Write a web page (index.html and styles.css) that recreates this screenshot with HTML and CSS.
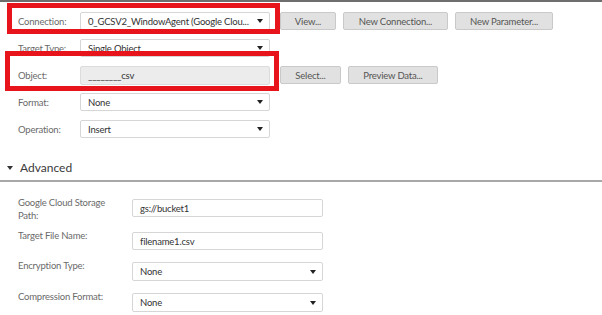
FILE: index.html
```html
<!DOCTYPE html>
<html>
<head>
<meta charset="utf-8">
<link rel="stylesheet" href="styles.css">
</head>
<body>
<div class="page">
  <section class="general">
    <div class="row">
      <span class="label">Connection:</span>
      <div class="select"><span>0_GCSV2_WindowAgent (Google Clou...</span><i class="arrow"></i></div>
      <div class="buttons">
        <button class="btn w-view">View...</button>
        <button class="btn w-newconn">New Connection...</button>
        <button class="btn w-newparam">New Parameter...</button>
      </div>
    </div>
    <div class="row">
      <span class="label">Target Type:</span>
      <div class="select"><span>Single Object</span><i class="arrow"></i></div>
    </div>
    <div class="row">
      <span class="label">Object:</span>
      <div class="input readonly"><span>________csv</span></div>
      <div class="buttons">
        <button class="btn w-select">Select...</button>
        <button class="btn w-preview">Preview Data...</button>
      </div>
    </div>
    <div class="row">
      <span class="label">Format:</span>
      <div class="select"><span>None</span><i class="arrow"></i></div>
    </div>
    <div class="row">
      <span class="label">Operation:</span>
      <div class="select"><span>Insert</span><i class="arrow"></i></div>
    </div>
  </section>

  <div class="adv-head"><i class="caret"></i><span>Advanced</span></div>

  <section class="advanced">
    <div class="arow r1">
      <span class="label">Google Cloud Storage<br>Path:</span>
      <div class="input"><span>gs://bucket1</span></div>
    </div>
    <div class="arow r2">
      <span class="label">Target File Name:</span>
      <div class="input"><span>filename1.csv</span></div>
    </div>
    <div class="arow r3">
      <span class="label">Encryption Type:</span>
      <div class="select"><span>None</span><i class="arrow"></i></div>
    </div>
    <div class="arow r4">
      <span class="label">Compression Format:</span>
      <div class="select"><span>None</span><i class="arrow"></i></div>
    </div>
  </section>

  <div class="mark mark1"></div>
  <div class="mark mark2"></div>
</div>
</body>
</html>
```
FILE: styles.css
```css
* { box-sizing: border-box; }
html, body { margin: 0; padding: 0; background: #fff; }
body {
  font-family: Lato, "Open Sans", sans-serif;
  font-size: 9.5px;
  letter-spacing: -0.2px;
  color: #333;
  width: 602px;
  height: 315px;
  overflow: hidden;
}
.page {
  position: relative;
  width: 602px;
  height: 315px;
  border-top: 2px solid #6e6e6e;
}
.general {
  display: flex;
  flex-direction: column;
  gap: 9px;
  padding: 10px 0 0 18px;
}
.row {
  display: flex;
  align-items: center;
  height: 18px;
}
.label {
  color: #6a6a6a;
  font-size: 9.5px;
  line-height: 13px;
}
.general .label { width: 62px; }
.select, .input {
  display: flex;
  align-items: center;
  justify-content: space-between;
  height: 18px;
  border: 1px solid #d6d6d6;
  border-radius: 2px;
  background: #fff;
  padding: 0 6px 0 7px;
  color: #333;
  font-size: 9.5px;
  white-space: nowrap;
  overflow: hidden;
}
.general .select, .general .input { width: 190px; }
.input.readonly { background: #ececec; border-color: #dcdcdc; height: 19px; }
.arrow {
  width: 0; height: 0;
  border-left: 3px solid transparent;
  border-right: 3px solid transparent;
  border-top: 4px solid #222;
  flex: none;
  margin-left: 4px;
}
.buttons {
  display: flex;
  gap: 7px;
  margin-left: 10px;
}
.btn {
  height: 18px;
  font-family: inherit;
  font-size: 9.5px;
  letter-spacing: -0.2px;
  color: #555;
  background: #e1e1e1;
  border: 1px solid #c9c9c9;
  border-radius: 2px;
  padding: 0;
}
.w-view { width: 56px; }
.w-newconn { width: 105px; }
.w-newparam { width: 98px; }
.w-select { width: 61px; }
.w-preview { width: 90px; }

.adv-head {
  display: flex;
  align-items: center;
  gap: 7px;
  margin-top: 23px;
  padding: 0 0 6px 7px;
  height: 21px;
  border-bottom: 2px solid #a8a8a8;
  font-size: 12px;
  letter-spacing: 0;
  color: #3a3a3a;
}
.caret {
  width: 0; height: 0;
  border-left: 3px solid transparent;
  border-right: 3px solid transparent;
  border-top: 4px solid #333;
}
.advanced {
  display: flex;
  flex-direction: column;
  padding: 17px 0 0 18px;
}
.arow {
  display: flex;
  align-items: flex-start;
}
.advanced .label { width: 114px; margin-top: -3px; }
.advanced .input, .advanced .select { width: 191px; }
.r1 { height: 33px; }
.r2 { height: 30px; }
.r3 { height: 31px; }
.r3 .select, .r4 .select { height: 19px; }

.mark {
  position: absolute;
  border: 5px solid #e8141c;
}
.mark1 { left: 7px; top: 1px; width: 273px; height: 31px; }
.mark2 { left: 5px; top: 49px; width: 274px; height: 40px; }
```
